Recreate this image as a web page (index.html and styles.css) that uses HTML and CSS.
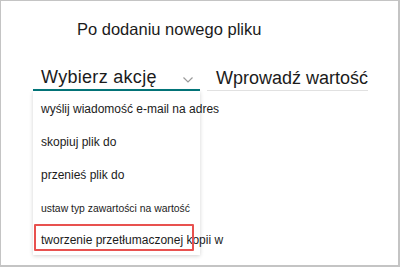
FILE: index.html
```html
<!DOCTYPE html>
<html lang="pl">
<head>
<meta charset="utf-8">
<link rel="stylesheet" href="styles.css">
</head>
<body>
<div class="frame">
  <div class="title">Po dodaniu nowego pliku</div>
  <div class="row">
    <div class="select">
      <div class="select-field">
        <span class="select-text">Wybierz akcję</span>
        <svg class="chev" width="10" height="6" viewBox="0 0 10 6"><path d="M0.5 0.5 L5 5 L9.5 0.5" fill="none" stroke="#9a9a9a" stroke-width="1.2"/></svg>
      </div>
      <ul class="menu">
        <li class="item">wyślij wiadomość e-mail na adres</li>
        <li class="item">skopiuj plik do</li>
        <li class="item">przenieś plik do</li>
        <li class="item small">ustaw typ zawartości na wartość</li>
        <li class="item highlighted">tworzenie przetłumaczonej kopii w</li>
      </ul>
    </div>
    <div class="input">Wprowadź wartość</div>
  </div>
</div>
</body>
</html>
```

FILE: styles.css
```css
html, body {
  margin: 0;
  padding: 0;
  background: #fff;
}
body {
  font-family: "Liberation Sans", Arial, sans-serif;
  color: #1b1b1b;
}
.frame {
  box-sizing: border-box;
  width: 400px;
  height: 267px;
  border-top: 1px solid #c4c4c4;
  border-left: 1px solid #c4c4c4;
  border-right: 2px solid #c4c4c4;
  border-bottom: 2px solid #c4c4c4;
  overflow: hidden;
}
.title {
  margin: 18px 0 0 76px;
  font-size: 16.5px;
  line-height: 20px;
}
.row {
  display: flex;
  gap: 7px;
  margin: 27px 0 0 32px;
  align-items: flex-start;
}
.select {
  flex: 0 0 167px;
  width: 167px;
  position: relative;
}
.select-field {
  display: flex;
  align-items: center;
  justify-content: space-between;
  height: 23px;
  padding: 0 7px 0 8px;
  border-bottom: 2px solid #03787c;
}
.select-text {
  font-size: 18px;
  letter-spacing: 0.3px;
  line-height: 23px;
}
.chev {
  margin-top: 4px;
}
.menu {
  list-style: none;
  margin: 0;
  padding: 1.5px 0 0;
  background: #fff;
  box-shadow: 0 1px 4px rgba(0,0,0,0.18);
  position: relative;
}
.item {
  height: 33px;
  line-height: 33px;
  padding-left: 8px;
  font-size: 12px;
  white-space: nowrap;
  color: #1b1b1b;
}
.item.small {
  font-size: 10.4px;
}
.item.highlighted {
  position: relative;
  height: 30px;
  line-height: 31px;
}
.item.highlighted::after {
  content: "";
  position: absolute;
  left: 1px;
  top: -1px;
  width: 156px;
  height: 23px;
  border: 2px solid #e8514f;
  border-radius: 1px;
}
.input {
  flex: 0 0 161px;
  width: 161px;
  height: 24px;
  box-sizing: border-box;
  padding-left: 9px;
  font-size: 18px;
  line-height: 23px;
  white-space: nowrap;
  border-bottom: 1px solid #e1e1e1;
  margin-top: 1px;
}
```
